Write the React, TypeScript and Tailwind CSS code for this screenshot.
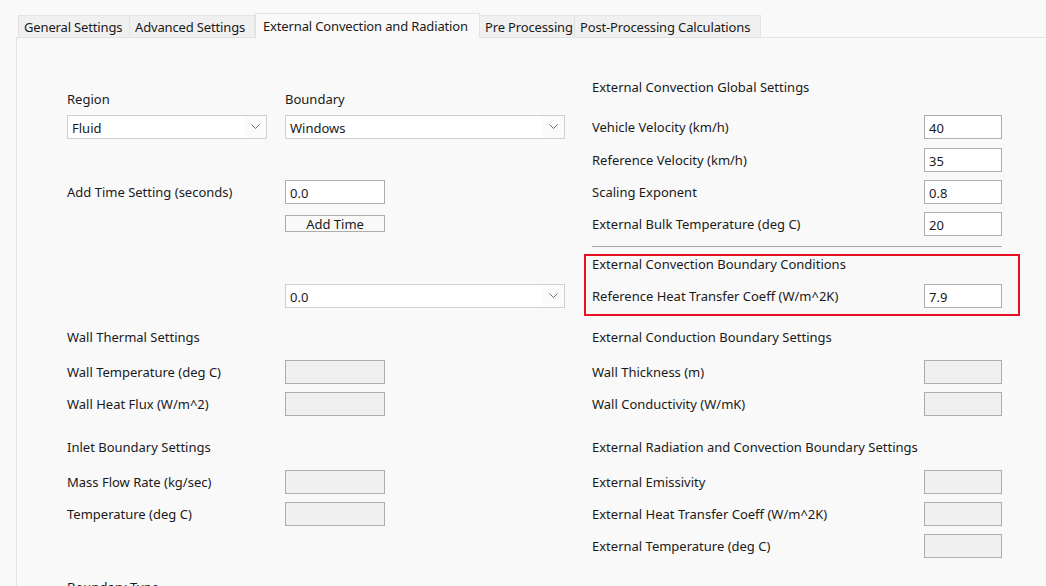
import { ReactNode } from 'react';

type TabProps = { label: string; width: string; active?: boolean };

function Tab({ label, width, active }: TabProps) {
  if (active) {
    return (
      <div
        className={`relative z-10 -mb-px flex h-[25px] ${width} items-center whitespace-nowrap border-x border-t border-[#e3e3e3] bg-[#f9f9f9] pb-[1px] pl-[7px] tracking-[-0.15px]`}
      >
        {label}
      </div>
    );
  }
  return (
    <div
      className={`flex h-[22px] ${width} items-center whitespace-nowrap border-t border-r border-[#e3e3e3] bg-[#f0f0f0] pl-[5px] pt-[1px] tracking-[-0.15px]`}
    >
      {label}
    </div>
  );
}

function Chevron() {
  return (
    <svg width="9" height="6" viewBox="0 0 9 6" className="text-[#6d6d6d]">
      <polyline points="0.5,0.5 4.5,4.5 8.5,0.5" fill="none" stroke="currentColor" strokeWidth="1" />
    </svg>
  );
}

function Dropdown({ value, width }: { value: string; width: string }) {
  return (
    <div className={`flex h-[24px] ${width} border border-[#cfcfcf] bg-white`}>
      <div className="flex flex-1 items-center pl-[4px] pt-[1px]">{value}</div>
      <div className="flex w-[22px] items-center justify-center bg-[#fbfbfb]">
        <Chevron />
      </div>
    </div>
  );
}

function TextBox({ value = '', width, disabled }: { value?: string; width: string; disabled?: boolean }) {
  return (
    <div
      className={`flex h-[24px] ${width} items-center border border-[#adadad] pl-[4px] pt-[1px] ${
        disabled ? 'bg-[#f0f0f0]' : 'bg-white'
      }`}
    >
      {value}
    </div>
  );
}

function Heading({ children, className = '' }: { children: ReactNode; className?: string }) {
  return <div className={`flex h-[18px] items-center ${className}`}>{children}</div>;
}

// left column: label 218px wide, then the field
function LeftRow({ label, value, disabled, className = '' }: { label: string; value?: string; disabled?: boolean; className?: string }) {
  return (
    <div className={`flex items-center ${className}`}>
      <div className="w-[218px]">{label}</div>
      <TextBox value={value} width="w-[100px]" disabled={disabled} />
    </div>
  );
}

// right column: label on the left, 78px box flush right
function RightRow({ label, value, disabled, className = '' }: { label: string; value?: string; disabled?: boolean; className?: string }) {
  return (
    <div className={`flex w-[410px] items-center justify-between ${className}`}>
      <div>{label}</div>
      <TextBox value={value} width="w-[78px]" disabled={disabled} />
    </div>
  );
}

export default function App() {
  return (
    <div className="h-[586px] w-[1046px] overflow-hidden bg-[#f9f9f9] font-['Noto_Sans','Segoe_UI',sans-serif] text-[13px] leading-[16px] text-[#1a1a1a]">
      <div className="flex h-[37px] items-end pl-[18px]">
        <div className="flex items-end border-l border-[#e3e3e3]">
          <Tab label="General Settings" width="w-[111px]" />
          <Tab label="Advanced Settings" width="w-[125px]" />
        </div>
        <Tab label="External Convection and Radiation" width="w-[225px]" active />
        <Tab label="Pre Processing" width="w-[95px]" />
        <Tab label="Post-Processing Calculations" width="w-[186px]" />
      </div>

      <div className="ml-[16px] flex h-[549px] border-l border-t border-[#e3e3e3]">
        {/* left column */}
        <div className="w-[575px] pl-[50px]">
          <div className="mt-[52px] flex h-[18px] items-center">
            <div className="w-[218px]">Region</div>
            <div>Boundary</div>
          </div>
          <div className="mt-[7px] flex gap-[18px]">
            <Dropdown value="Fluid" width="w-[200px]" />
            <Dropdown value="Windows" width="w-[280px]" />
          </div>

          <LeftRow label="Add Time Setting (seconds)" value="0.0" className="mt-[41px]" />
          <div className="ml-[218px] mt-[11px] flex h-[17px] w-[100px] items-center justify-center border border-[#adadad] bg-[#f9f9f9]">
            Add Time
          </div>
          <div className="ml-[218px] mt-[52px]">
            <Dropdown value="0.0" width="w-[280px]" />
          </div>

          <Heading className="mt-[20px]">Wall Thermal Settings</Heading>
          <LeftRow label="Wall Temperature (deg C)" disabled className="mt-[14px]" />
          <LeftRow label="Wall Heat Flux (W/m^2)" disabled className="mt-[8px]" />

          <Heading className="mt-[22px]">Inlet Boundary Settings</Heading>
          <LeftRow label="Mass Flow Rate (kg/sec)" disabled className="mt-[14px]" />
          <LeftRow label="Temperature (deg C)" disabled className="mt-[8px]" />

          <Heading className="mt-[52px]">Boundary Type</Heading>
        </div>

        {/* right column */}
        <div className="flex-1">
          <Heading className="mt-[40px]">External Convection Global Settings</Heading>
          <RightRow label="Vehicle Velocity (km/h)" value="40" className="mt-[19px]" />
          <RightRow label="Reference Velocity (km/h)" value="35" className="mt-[9px]" />
          <RightRow label="Scaling Exponent" value="0.8" className="mt-[8px]" />
          <RightRow label="External Bulk Temperature (deg C)" value="20" className="mt-[8px]" />
          <div className="mt-[10px] h-px w-[410px] bg-[#a8a8a8]" />

          <div className="-ml-[8px] mt-[7px] h-[62px] w-[436px] border-2 border-[#e81123] pl-[6px]">
            <div className="flex h-[16px] items-center">External Convection Boundary Conditions</div>
            <RightRow label="Reference Heat Transfer Coeff (W/m^2K)" value="7.9" className="mt-[12px]" />
          </div>

          <Heading className="mt-[12px]">External Conduction Boundary Settings</Heading>
          <RightRow label="Wall Thickness (m)" disabled className="mt-[14px]" />
          <RightRow label="Wall Conductivity (W/mK)" disabled className="mt-[8px]" />

          <Heading className="mt-[22px]">External Radiation and Convection Boundary Settings</Heading>
          <RightRow label="External Emissivity" disabled className="mt-[14px]" />
          <RightRow label="External Heat Transfer Coeff (W/m^2K)" disabled className="mt-[8px]" />
          <RightRow label="External Temperature (deg C)" disabled className="mt-[8px]" />
        </div>
      </div>
    </div>
  );
}
